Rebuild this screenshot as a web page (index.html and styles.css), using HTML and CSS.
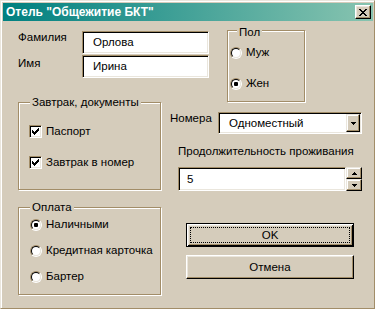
FILE: index.html
```
<!DOCTYPE html>
<html lang="ru">
<head>
<meta charset="utf-8">
<title>Отель "Общежитие БКТ"</title>
<link rel="stylesheet" href="styles.css">
</head>
<body>
<div class="window">
  <div class="titlebar">
    <span class="title">Отель "Общежитие БКТ"</span>
    <span class="close"><svg width="8" height="7" viewBox="0 0 8 7" shape-rendering="crispEdges"><path d="M0 0h2v1H0z M6 0h2v1H6z M1 1h2v1H1z M5 1h2v1H5z M2 2h4v1H2z M3 3h2v1H3z M2 4h4v1H2z M1 5h2v1H1z M5 5h2v1H5z M0 6h2v1H0z M6 6h2v1H6z" fill="#000"/></svg></span>
  </div>
  <div class="client">
    <div class="row row1">
      <div class="names">
        <span class="lbl">Фамилия</span><div class="edit name">Орлова</div>
        <span class="lbl lbl2">Имя</span><div class="edit name">Ирина</div>
      </div>
      <div class="group pol">
        <span class="legend">Пол</span>
        <div class="opt"><span class="radio"><span class="radio-in"></span></span>Муж</div>
        <div class="opt"><span class="radio checked"><span class="radio-in"></span></span>Жен</div>
      </div>
    </div>
    <div class="row row2">
      <div class="group docs">
        <span class="legend">Завтрак, документы</span>
        <div class="opt"><span class="check"><svg width="7" height="7" viewBox="0 0 7 7" shape-rendering="crispEdges"><path d="M0 2h1v3H0z M1 3h1v3H1z M2 4h1v3H2z M3 3h1v3H3z M4 2h1v3H4z M5 1h1v3H5z M6 0h1v3H6z" fill="#000"/></svg></span>Паспорт</div>
        <div class="opt"><span class="check"><svg width="7" height="7" viewBox="0 0 7 7" shape-rendering="crispEdges"><path d="M0 2h1v3H0z M1 3h1v3H1z M2 4h1v3H2z M3 3h1v3H3z M4 2h1v3H4z M5 1h1v3H5z M6 0h1v3H6z" fill="#000"/></svg></span>Завтрак в номер</div>
      </div>
      <div class="rooms">
        <div class="rooms-row">
          <span class="lbl rooms-lbl">Номера</span>
          <div class="combo">
            <span class="combo-text">Одноместный</span>
            <span class="dd"><svg width="5" height="3" viewBox="0 0 5 3" shape-rendering="crispEdges"><path d="M0 0h5v1H0z M1 1h3v1H1z M2 2h1v1H2z" fill="#000"/></svg></span>
          </div>
        </div>
        <div class="lbl dur-lbl">Продолжительность проживания</div>
        <div class="spin">
          <div class="edit spin-edit">5</div>
          <div class="spin-btns">
            <span class="sbtn"><svg width="5" height="3" viewBox="0 0 5 3" shape-rendering="crispEdges"><path d="M2 0h1v1H2z M1 1h3v1H1z M0 2h5v1H0z" fill="#000"/></svg></span>
            <span class="sbtn"><svg width="5" height="3" viewBox="0 0 5 3" shape-rendering="crispEdges"><path d="M0 0h5v1H0z M1 1h3v1H1z M2 2h1v1H2z" fill="#000"/></svg></span>
          </div>
        </div>
      </div>
    </div>
    <div class="row row3">
      <div class="group pay">
        <span class="legend">Оплата</span>
        <div class="opt"><span class="radio checked"><span class="radio-in"></span></span>Наличными</div>
        <div class="opt"><span class="radio"><span class="radio-in"></span></span>Кредитная карточка</div>
        <div class="opt"><span class="radio"><span class="radio-in"></span></span>Бартер</div>
      </div>
      <div class="buttons">
        <button class="btn default" type="button">OK</button>
        <button class="btn" type="button">Отмена</button>
      </div>
    </div>
  </div>
</div>
</body>
</html>
```
FILE: styles.css
```
html, body {
  margin: 0;
  padding: 0;
}
body {
  background: #d5ccbb;
  font-family: "Liberation Sans", "DejaVu Sans", sans-serif;
  font-size: 11.5px;
  line-height: 13px;
  color: #000;
}
.window {
  width: 375px;
  height: 309px;
  box-sizing: border-box;
  border: 1px solid;
  border-color: #eae6dd #a28d68 #a28d68 #eae6dd;
  box-shadow: inset 1px 1px 0 #fff;
  padding: 2px 1px 1px 2px;
  background: #d5ccbb;
  overflow: hidden;
}
.titlebar {
  height: 18px;
  background: linear-gradient(to right, #008080, #88c4b0);
  display: flex;
  align-items: center;
  justify-content: space-between;
  padding: 0 2px 0 3px;
}
.title {
  color: #fff;
  font-weight: bold;
  font-size: 12px;
  white-space: nowrap;
}
.close {
  width: 16px;
  height: 14px;
  box-sizing: border-box;
  background: #d5ccbb;
  border: 1px solid;
  border-color: #fff #000 #000 #fff;
  box-shadow: inset -1px -1px 0 #a28d68, inset 1px 1px 0 #eae6dd;
  display: flex;
  align-items: center;
  justify-content: center;
}
.client {
  padding-left: 15px;
}
.row {
  display: flex;
  align-items: flex-start;
}
.row1 {
  margin-top: 9px;
  height: 72px;
}
.row2 {
  height: 88px;
}
.row3 {
  margin-top: 17px;
  height: 88px;
}
.names {
  display: grid;
  grid-template-columns: 64px 127px;
  row-gap: 1px;
  margin-top: 1px;
}
.lbl {
  white-space: nowrap;
}
.lbl2 {
  padding-top: 2px;
}
.edit {
  box-sizing: border-box;
  height: 23px;
  border: 1px solid;
  border-color: #a28d68 #fff #fff #a28d68;
  box-shadow: inset 1px 1px 0 #000, inset -1px -1px 0 #eae6dd;
  background: #fff;
  padding-left: 10px;
  display: flex;
  align-items: center;
}
.group {
  position: relative;
  box-sizing: border-box;
  border: 1px solid #a28d68;
  box-shadow: 1px 1px 0 #fff, inset 1px 1px 0 #fff;
}
.legend {
  position: absolute;
  top: -7px;
  left: 11px;
  padding: 0 2px;
  background: #d5ccbb;
  white-space: nowrap;
}
.opt {
  display: flex;
  align-items: center;
  height: 13px;
  white-space: nowrap;
}
.pol {
  margin-left: 18px;
  width: 78px;
  height: 72px;
  padding: 15px 0 0 2px;
}
.pol .legend {
  top: -5px;
  left: 9px;
}
.pol .opt + .opt {
  margin-top: 18px;
}
.radio {
  box-sizing: border-box;
  flex: none;
  width: 12px;
  height: 12px;
  border-radius: 50%;
  border: 1px solid;
  border-color: #a28d68 #fff #fff #a28d68;
  margin-right: 4px;
  display: flex;
}
.radio-in {
  flex: 1;
  border-radius: 50%;
  border: 1px solid;
  border-color: #000 #eae6dd #eae6dd #000;
  background: #fff;
  display: flex;
  align-items: center;
  justify-content: center;
}
.radio.checked .radio-in::after {
  content: "";
  width: 4px;
  height: 4px;
  border-radius: 1px;
  background: #000;
}
.check {
  box-sizing: border-box;
  flex: none;
  width: 13px;
  height: 13px;
  border: 1px solid;
  border-color: #a28d68 #fff #fff #a28d68;
  box-shadow: inset 1px 1px 0 #000, inset -1px -1px 0 #eae6dd;
  background: #fff;
  margin-right: 4px;
  display: flex;
  align-items: center;
  justify-content: center;
}
.docs {
  width: 143px;
  height: 88px;
  padding: 22px 0 0 10px;
}
.docs .opt + .opt {
  margin-top: 18px;
}
.rooms {
  margin-left: 9px;
  padding-top: 10px;
  display: flex;
  flex-direction: column;
  align-items: flex-start;
}
.rooms-row {
  display: flex;
  align-items: flex-start;
}
.rooms-lbl {
  width: 48px;
}
.combo {
  box-sizing: border-box;
  width: 144px;
  height: 22px;
  border: 1px solid;
  border-color: #a28d68 #fff #fff #a28d68;
  box-shadow: inset 1px 1px 0 #000, inset -1px -1px 0 #eae6dd;
  background: #fff;
  padding: 1px;
  display: flex;
  align-items: stretch;
}
.combo-text {
  flex: 1;
  padding-left: 9px;
  display: flex;
  align-items: center;
}
.dd, .sbtn {
  box-sizing: border-box;
  background: #d5ccbb;
  border: 1px solid;
  border-color: #eae6dd #000 #000 #eae6dd;
  box-shadow: inset -1px -1px 0 #a28d68, inset 1px 1px 0 #fff;
  display: flex;
  align-items: center;
  justify-content: center;
}
.dd {
  width: 14px;
}
.dur-lbl {
  margin-top: 11px;
  margin-left: 8px;
}
.spin {
  margin-left: 8px;
  margin-top: 9px;
  display: flex;
  height: 24px;
}
.spin-edit {
  width: 168px;
  height: 24px;
  padding-left: 8px;
}
.spin-btns {
  width: 16px;
  display: flex;
  flex-direction: column;
}
.sbtn {
  height: 12px;
}
.pay {
  width: 143px;
  height: 88px;
  padding: 10px 0 0 11px;
}
.pay .opt + .opt {
  margin-top: 13px;
}
.buttons {
  margin-left: 25px;
  margin-top: 16px;
  display: flex;
  flex-direction: column;
  gap: 8px;
}
.btn {
  box-sizing: border-box;
  width: 168px;
  height: 24px;
  margin: 0;
  padding: 0;
  font: inherit;
  color: #000;
  background: #d5ccbb;
  border: 1px solid;
  border-color: #fff #000 #000 #fff;
  box-shadow: inset -1px -1px 0 #a28d68, inset 1px 1px 0 #eae6dd;
}
.btn.default {
  border-color: #000;
  box-shadow: inset 1px 1px 0 #fff, inset -1px -1px 0 #000, inset 2px 2px 0 #eae6dd, inset -2px -2px 0 #a28d68;
  outline: 1px dotted #000;
  outline-offset: -5px;
}
```
